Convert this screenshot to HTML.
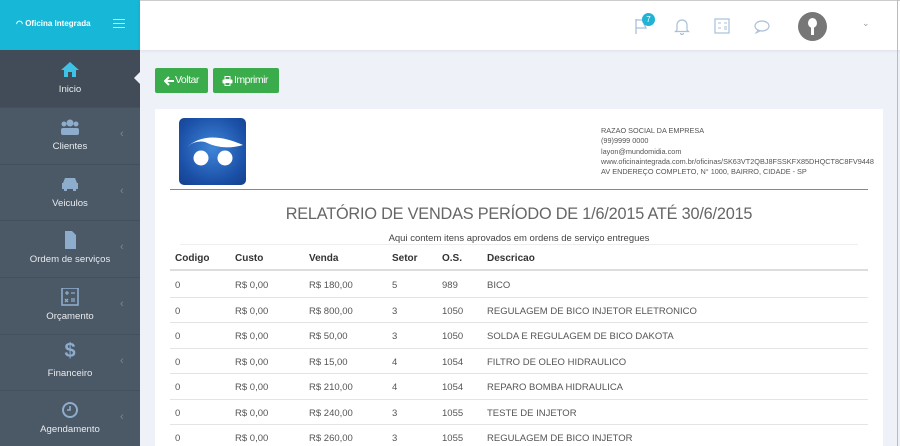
<!DOCTYPE html><html><head><meta charset="utf-8"><style>
*{margin:0;padding:0;box-sizing:border-box}
html,body{width:900px;height:446px;overflow:hidden}
body{background:#eef1f8;font-family:"Liberation Sans",sans-serif;position:relative}
.sb{position:absolute;left:0;top:0;width:140px;height:446px;background:#4b5866}
.brand{height:50px;background:#17b7d7;position:relative;color:#fff;font-size:8px;font-weight:bold}
.item{position:absolute;left:0;width:140px;height:57px;border-top:1px solid #44505d;color:#e8ecef;font-size:9.6px;text-align:center}
.item .lb{position:absolute;left:0;right:0;bottom:12px}
.item .ic{position:absolute;left:60px;top:10px;width:20px;height:18px}
.item .ch{position:absolute;left:120px;top:20px;color:#7b8794;font-size:11px}
.top{position:absolute;left:140px;top:0;right:0;height:50px;background:#fff;box-shadow:0 1px 3px rgba(0,0,0,.08);border-top:1px solid #ccc}
.btn{position:absolute;top:68px;height:25px;background:#3aac4b;border-radius:2px;color:#fff;font-size:10.5px;line-height:25px;letter-spacing:-.5px}
.card{position:absolute;left:155px;top:109px;width:728px;height:337px;background:#fff}
.r{position:absolute;left:170px;width:698px;height:25.5px;border-bottom:1px solid #e4e4e4;font-size:9.5px;color:#555}
.r span{position:absolute;top:8px}
</style></head><body>
<div class="sb">
<div class="brand"><span style="position:absolute;left:16px;top:19px;font-size:8px">◠ Oficina Integrada</span>
<div style="position:absolute;left:113px;top:19px;width:12px;height:1px;background:#cfeff6;box-shadow:0 4px 0 #cfeff6,0 8px 0 #cfeff6"></div></div>
<div class="item" style="top:50px;background:#414c58;border:none"><svg class="ic" viewBox="0 0 20 18"><path d="M10 2L1 10h3v7h4v-5h4v5h4v-7h3z" fill="#3ec2e6"/></svg><div class="lb">Inicio</div></div>
<div style="position:absolute;left:134px;top:72px;border:6px solid transparent;border-right-color:#eef1f8;border-left:0"></div>
<div class="item" style="top:107px"><svg class="ic" viewBox="0 0 20 18"><circle cx="10" cy="5" r="3.5" fill="#8eaccc"/><circle cx="4" cy="6" r="2.5" fill="#8eaccc"/><circle cx="16" cy="6" r="2.5" fill="#8eaccc"/><rect x="1" y="10" width="18" height="7" rx="2" fill="#8eaccc"/></svg><div class="lb">Clientes</div><span class="ch">‹</span></div>
<div class="item" style="top:164px"><svg class="ic" viewBox="0 0 20 18"><path d="M3 8l2-5h10l2 5h1v6h-2v2h-3v-2H7v2H4v-2H2V8z" fill="#8eaccc"/></svg><div class="lb">Veiculos</div><span class="ch">‹</span></div>
<div class="item" style="top:220px"><svg class="ic" viewBox="0 0 20 18"><path d="M5 0h7l4 4v14H5z" fill="#8eaccc"/></svg><div class="lb">Ordem de serviços</div><span class="ch">‹</span></div>
<div class="item" style="top:277px"><svg class="ic" viewBox="0 0 20 18"><rect x="2" y="0" width="16" height="17" fill="none" stroke="#8eaccc" stroke-width="1.6"/><path d="M5 5h4M7 3v4M11 5h4M5 11l3 3M8 11l-3 3M11 11h4M11 13h4" stroke="#8eaccc" stroke-width="1.3"/></svg><div class="lb">Orçamento</div><span class="ch">‹</span></div>
<div class="item" style="top:334px"><div class="ic" style="color:#8eaccc;font-size:20px;font-weight:bold;top:5px">$</div><div class="lb">Financeiro</div><span class="ch">‹</span></div>
<div class="item" style="top:390px"><svg class="ic" viewBox="0 0 20 18"><circle cx="10" cy="9" r="7" fill="none" stroke="#8eaccc" stroke-width="2"/><path d="M10 5v4H7" stroke="#8eaccc" stroke-width="1.6" fill="none"/></svg><div class="lb">Agendamento</div><span class="ch">‹</span></div>
</div>
<div class="top">
<svg style="position:absolute;left:494px;top:17px" width="14" height="17" viewBox="0 0 14 17"><path d="M2 1v15M2 2h10l-2 4 2 4H2" fill="none" stroke="#a8c0d8" stroke-width="1.3"/></svg>
<div style="position:absolute;left:502px;top:12px;width:13px;height:13px;border-radius:50%;background:#1fb3d6;color:#fff;font-size:8px;text-align:center;line-height:13px">7</div>
<svg style="position:absolute;left:534px;top:17px" width="16" height="17" viewBox="0 0 16 17"><path d="M3 12V7a5 5 0 0110 0v5l1.5 1.5h-13zM6.5 15a1.5 1.5 0 003 0" fill="none" stroke="#a8c0d8" stroke-width="1.2"/></svg>
<svg style="position:absolute;left:574px;top:17px" width="16" height="16" viewBox="0 0 16 16"><rect x="1" y="1" width="14" height="14" fill="none" stroke="#a8c0d8" stroke-width="1.2"/><path d="M4 5h3M10 5h3M4 10h3M10 9h3M10 11h3" stroke="#a8c0d8"/></svg>
<svg style="position:absolute;left:614px;top:18px" width="18" height="16" viewBox="0 0 18 16"><ellipse cx="8" cy="7" rx="7" ry="5" fill="none" stroke="#a8c0d8" stroke-width="1.2"/><path d="M4 11l-2 3 4-2" fill="none" stroke="#a8c0d8"/></svg>
<div style="position:absolute;left:658px;top:11px;width:29px;height:29px;border-radius:50%;background:#777"><div style="position:absolute;left:10px;top:6px;width:9px;height:10px;border-radius:50%;background:#fff"></div><div style="position:absolute;left:13px;top:14px;width:3px;height:9px;background:#fff"></div></div>
<span style="position:absolute;left:722px;top:17px;color:#999;font-size:9px">⌄</span>
</div>
<div style="position:absolute;right:2px;top:0;width:1px;height:446px;background:#bbb"></div>
<div class="btn" style="left:155px;width:53px"><svg style="position:absolute;left:9px;top:8px" width="10" height="10" viewBox="0 0 10 10"><path d="M5 1L1 5l4 4M1 5h9" stroke="#fff" stroke-width="2" fill="none"/></svg><span style="position:absolute;left:20px">Voltar</span></div>
<div class="btn" style="left:213px;width:66px"><svg style="position:absolute;left:9px;top:8px" width="11" height="10" viewBox="0 0 11 10"><rect x="3" y="0.5" width="5" height="3" fill="none" stroke="#fff"/><rect x="0.5" y="3.5" width="10" height="4" rx="1" fill="#fff"/><rect x="3" y="6.5" width="5" height="3" fill="#3aac4b" stroke="#fff"/></svg><span style="position:absolute;left:21px">Imprimir</span></div>
<div class="card"></div>
<div style="position:absolute;left:179px;top:118px;width:67px;height:67px;border-radius:5px;background:radial-gradient(circle at 50% 45%,#3f86d8,#1a4fa6 70%,#173f8a)">
<svg width="67" height="67" viewBox="0 0 67 67"><path d="M8 29q20-18 56-2q-20 6-38-3q-10-2-18 5z" fill="#fff"/><circle cx="22" cy="40" r="7.5" fill="#fff"/><circle cx="46" cy="40" r="7.5" fill="#fff"/></svg></div>
<div style="position:absolute;left:601px;top:126px;font-size:7.3px;line-height:10.3px;color:#555">RAZAO SOCIAL DA EMPRESA<br>(99)9999 0000<br>layon@mundomidia.com<br>www.oficinaintegrada.com.br/oficinas/SK63VT2QBJ8FSSKFX85DHQCT8C8FV9448<br>AV ENDEREÇO COMPLETO, N° 1000, BAIRRO, CIDADE - SP</div>
<div style="position:absolute;left:170px;top:189px;width:698px;height:1px;background:#888"></div>
<div style="position:absolute;left:170px;top:205px;width:698px;text-align:center;font-size:16.3px;color:#666;letter-spacing:-.2px">RELATÓRIO DE VENDAS PERÍODO DE 1/6/2015 ATÉ 30/6/2015</div>
<div style="position:absolute;left:180px;top:233px;width:678px;text-align:center;font-size:9.5px;color:#444">Aqui contem itens aprovados em ordens de serviço entregues</div>
<div style="position:absolute;left:180px;top:244px;width:678px;height:1px;background:#eee"></div>
<div class="r" style="top:245px;height:26px;border-bottom:2px solid #ddd;font-weight:bold;color:#333;font-size:10px"><span style="left:5px">Codigo</span><span style="left:65px">Custo</span><span style="left:139px">Venda</span><span style="left:222px">Setor</span><span style="left:272px">O.S.</span><span style="left:317px">Descricao</span></div>
<div class="r" style="top:272px"><span style="left:5px">0</span><span style="left:65px">R$ 0,00</span><span style="left:139px">R$ 180,00</span><span style="left:222px">5</span><span style="left:272px">989</span><span style="left:317px">BICO</span></div>
<div class="r" style="top:297.5px"><span style="left:5px">0</span><span style="left:65px">R$ 0,00</span><span style="left:139px">R$ 800,00</span><span style="left:222px">3</span><span style="left:272px">1050</span><span style="left:317px">REGULAGEM DE BICO INJETOR ELETRONICO</span></div>
<div class="r" style="top:323px"><span style="left:5px">0</span><span style="left:65px">R$ 0,00</span><span style="left:139px">R$ 50,00</span><span style="left:222px">3</span><span style="left:272px">1050</span><span style="left:317px">SOLDA E REGULAGEM DE BICO DAKOTA</span></div>
<div class="r" style="top:348.5px"><span style="left:5px">0</span><span style="left:65px">R$ 0,00</span><span style="left:139px">R$ 15,00</span><span style="left:222px">4</span><span style="left:272px">1054</span><span style="left:317px">FILTRO DE OLEO HIDRAULICO</span></div>
<div class="r" style="top:374px"><span style="left:5px">0</span><span style="left:65px">R$ 0,00</span><span style="left:139px">R$ 210,00</span><span style="left:222px">4</span><span style="left:272px">1054</span><span style="left:317px">REPARO BOMBA HIDRAULICA</span></div>
<div class="r" style="top:399.5px"><span style="left:5px">0</span><span style="left:65px">R$ 0,00</span><span style="left:139px">R$ 240,00</span><span style="left:222px">3</span><span style="left:272px">1055</span><span style="left:317px">TESTE DE INJETOR</span></div>
<div class="r" style="top:425px;border-bottom:none"><span style="left:5px">0</span><span style="left:65px">R$ 0,00</span><span style="left:139px">R$ 260,00</span><span style="left:222px">3</span><span style="left:272px">1055</span><span style="left:317px">REGULAGEM DE BICO INJETOR</span></div>
</body></html>
